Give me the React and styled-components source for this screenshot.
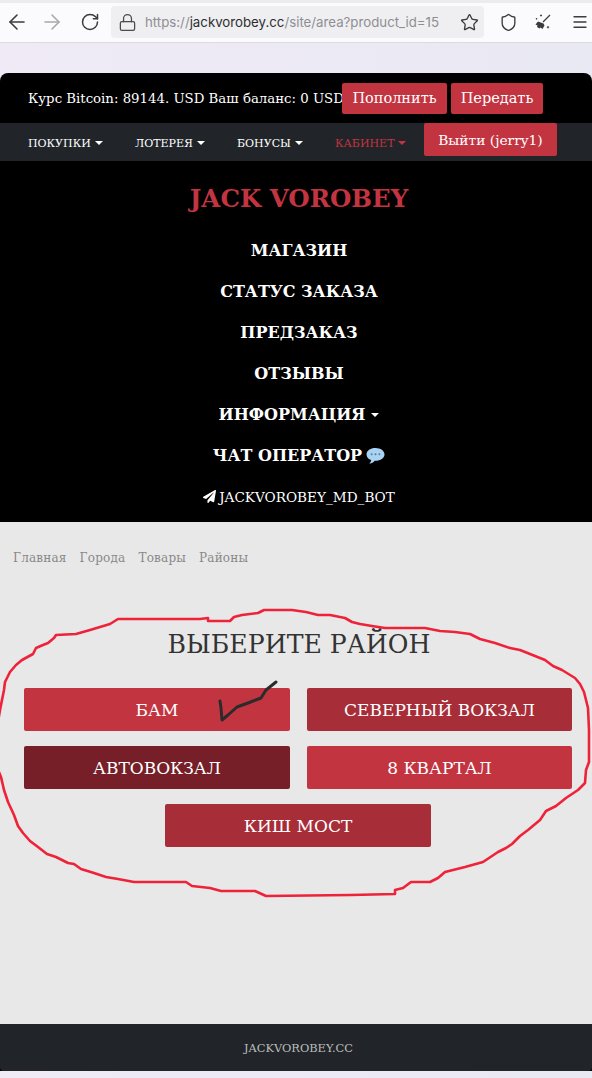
import React from "react";
import styled, { createGlobalStyle } from "styled-components";
import { ArrowLeft, ArrowRight, RotateCw, Lock, Star, Shield, Menu } from "lucide-react";
import { FaPaperPlane } from "react-icons/fa";

const serif = `"DejaVu Serif", "Liberation Serif", serif`;

const GlobalStyle = createGlobalStyle`
  html, body {
    margin: 0;
    padding: 0;
    background: #ebebf4;
  }
  * { box-sizing: border-box; }
`;

const Screen = styled.div`
  position: relative;
  width: 592px;
  height: 1078px;
  overflow: hidden;
  background: linear-gradient(90deg, #efeaf6 0%, #e9e9f3 100%);
  font-family: ${serif};
`;

const TopStrip = styled.div`
  height: 3px;
  background: #ececee;
`;

const Toolbar = styled.div`
  display: flex;
  align-items: center;
  height: 40px;
  padding-bottom: 1px;
  background: #fbfbfd;
  border-bottom: 1px solid #dcdce0;
`;

const ToolIcon = styled.div`
  flex: none;
  display: flex;
  justify-content: center;
  width: ${(p) => p.$w}px;
  color: ${(p) => (p.$dim ? "#a8a8ad" : "#3b3b40")};
`;

const UrlBox = styled.div`
  display: flex;
  align-items: center;
  flex: none;
  width: 373px;
  height: 32px;
  margin-left: 2px;
  padding-left: 7px;
  background: #efeff1;
  border-radius: 4px;
`;

const UrlText = styled.div`
  flex: 1;
  margin-left: 8px;
  font-family: "Inter", "Liberation Sans", sans-serif;
  font-size: 13.25px;
  color: #8e8e93;
  white-space: nowrap;

  b {
    font-weight: 400;
    color: #2d2d30;
  }
`;

const Page = styled.div`
  margin-top: 30px;
  border-radius: 8px 8px 0 0;
  overflow: hidden;
  background: #000;
`;

const InfoBar = styled.div`
  display: flex;
  align-items: center;
  height: 50px;
  padding: 0 0 0 28px;
  color: #fff;
`;

const InfoText = styled.div`
  width: 314px;
  font-size: 13.3px;
  white-space: nowrap;
`;

const RedButton = styled.div`
  display: flex;
  align-items: center;
  justify-content: center;
  flex: none;
  width: ${(p) => p.$w}px;
  height: ${(p) => p.$h}px;
  margin-right: ${(p) => p.$mr || 0}px;
  background: #c33441;
  border-radius: 2px;
  color: #fff;
  font-size: ${(p) => p.$size || 14.5}px;
`;

const NavBar = styled.div`
  display: flex;
  height: 38px;
  padding-left: 28px;
  background: #212529;
`;

const NavLink = styled.div`
  display: flex;
  align-items: center;
  flex: none;
  width: ${(p) => p.$w}px;
  height: 38px;
  padding-top: 2px;
  color: ${(p) => (p.$active ? "#c33441" : "#fff")};
  font-size: 11px;
  white-space: nowrap;
`;

const Caret = styled.span`
  display: inline-block;
  margin-left: ${(p) => p.$gap || 4}px;
  border-top: 4px solid currentColor;
  border-left: 4px solid transparent;
  border-right: 4px solid transparent;
`;

const Header = styled.div`
  display: flex;
  flex-direction: column;
  align-items: center;
  height: 361px;
  padding: 20px 0 0 6px;
  color: #fff;
`;

const Logo = styled.div`
  height: 35px;
  margin-bottom: 14px;
  color: #c33441;
  font-size: 24.5px;
  font-weight: 700;
  line-height: 35px;
`;

const MainLink = styled.div`
  display: flex;
  align-items: center;
  height: 41px;
  font-size: 16px;
  font-weight: 700;
`;

const BotLink = styled.div`
  display: flex;
  align-items: center;
  gap: 3px;
  height: 41px;
  font-size: 13.6px;
`;

const Content = styled.div`
  height: 502px;
  padding-top: 28px;
  background: #e8e8e8;
`;

const Crumbs = styled.div`
  display: flex;
  gap: 13px;
  height: 17px;
  padding-left: 13px;
  color: #888;
  font-size: 12px;
  letter-spacing: 0.2px;
  line-height: 17px;
`;

const Title = styled.h2`
  margin: 0;
  padding: 61px 0 0 6px;
  height: 121px;
  color: #333;
  font-size: 25.2px;
  font-weight: 400;
  line-height: 34px;
  text-align: center;
`;

const AreaGrid = styled.div`
  display: grid;
  grid-template-columns: 266px 265px;
  gap: 15px 17px;
  padding-left: 24px;
`;

const AreaButton = styled.div`
  display: flex;
  align-items: center;
  justify-content: center;
  height: 43px;
  padding-top: 1px;
  background: ${(p) => p.$bg};
  border-radius: 2px;
  color: #fff;
  font-size: 17px;
  ${(p) => p.$wide && "grid-column: 1 / -1; justify-self: center; width: 266px;"}
`;

const Footer = styled.div`
  display: flex;
  align-items: center;
  justify-content: center;
  height: 47px;
  padding-left: 5px;
  background: #212529;
  border-radius: 0 0 4px 4px;
  color: #bdbdbd;
  font-size: 11.4px;
`;

const Markup = styled.svg`
  position: absolute;
  left: 0;
  top: 0;
  pointer-events: none;
`;

const loop =
  "-6,745 0,710 4,690 5,682 10,672 16,665 22,660 33,654 36,648 43,645 48,643 54,638 56,635 76,634 83,632 90,630 100,627 110,624 118,619 200,619 208,618 208,621 230,621 234,617 242,615 258,613 264,610 292,610 306,612 318,615 330,615 345,618 352,622 360,624 372,626 385,628 425,628 440,631 455,632 470,634 480,639 495,643 510,648 520,650 535,656 545,660 553,666 562,670 575,678 580,684 584,692 588,708 589,730 589,762 586,770 585,783 578,790 566,798 556,806 546,811 540,820 528,830 520,836 512,844 506,848 498,852 483,862 465,867 445,872 438,878 430,882 411,882 403,888 395,890 395,894 351,895 266,896 255,891 221,891 210,888 192,886 186,882 134,882 118,879 106,877 94,873 81,869 74,864 68,863 56,857 47,854 38,847 30,841 23,833 18,826 14,815 8,802 4,790 1,777 -6,760";
const check = "220,701 221,708 222,720 228,715 237,707 248,703 261,698 266,690 276,682";

function Broom() {
  return (
    <svg width="18" height="18" viewBox="0 0 18 18">
      <path d="M9 9 16 2" stroke="#3b3b40" strokeWidth="1.3" fill="none" />
      <path d="M4 8.5 9.5 10.5 10.5 12.5 8.5 16 6.5 14.5 5.5 15.5 3 14 3.5 12.5 1.5 11.5Z" fill="#3b3b40" />
      <path d="M7 1.5v2M6 2.5h2M2.5 5v1.5M1.8 5.7h1.5M14 13v2.4M12.8 14.2h2.4" stroke="#3b3b40" strokeWidth="0.9" />
    </svg>
  );
}

function Bubble() {
  return (
    <svg width="19" height="18" viewBox="0 0 19 18" style={{ marginLeft: 4 }}>
      <path d="M9.5 1C4.5 1 .5 3.6.5 7.4c0 2.6 2 4.7 4.7 5.7-.2 1.4-.9 2.7-1.8 3.6 2.3-.3 4.2-1.5 5.4-3h.7c5 0 9-2.7 9-6.3S14.500 1 9.500 1z" fill="#a9d3f2" />
      <circle cx="5.600" cy="7.300" r="1" fill="#5d7f98" />
      <circle cx="9.500" cy="7.300" r="1" fill="#5d7f98" />
      <circle cx="13.400" cy="7.300" r="1" fill="#5d7f98" />
    </svg>
  );
}

const navItems = [
  { label: "ПОКУПКИ", w: 107 },
  { label: "ЛОТЕРЕЯ", w: 102 },
  { label: "БОНУСЫ", w: 98 },
  { label: "КАБИНЕТ", w: 89, active: true },
];

const areas = [
  { name: "БАМ", bg: "#c33441" },
  { name: "СЕВЕРНЫЙ ВОКЗАЛ", bg: "#a72e39" },
  { name: "АВТОВОКЗАЛ", bg: "#761f28" },
  { name: "8 КВАРТАЛ", bg: "#c33441" },
  { name: "КИШ МОСТ", bg: "#a72e39", wide: true },
];

export default function App() {
  return (
    <Screen>
      <GlobalStyle />
      <TopStrip />
      <Toolbar>
        <ToolIcon $w={33}><ArrowLeft size={24} strokeWidth={1.6} /></ToolIcon>
        <ToolIcon $w={38} $dim><ArrowRight size={24} strokeWidth={1.6} /></ToolIcon>
        <ToolIcon $w={38}><RotateCw size={20} strokeWidth={1.8} /></ToolIcon>
        <UrlBox>
          <Lock size={19} strokeWidth={1.6} color="#4a4a4f" />
          <UrlText>https://<b>jackvorobey.cc</b>/site/area?product_id=15</UrlText>
          <ToolIcon $w={30}><Star size={19} strokeWidth={1.7} /></ToolIcon>
        </UrlBox>
        <ToolIcon $w={48}><Shield size={19} strokeWidth={1.7} /></ToolIcon>
        <ToolIcon $w={22}><Broom /></ToolIcon>
        <ToolIcon $w={52}><Menu size={18} strokeWidth={1.7} /></ToolIcon>
      </Toolbar>

      <Page>
        <InfoBar>
          <InfoText>Курс Bitcoin: 89144. USD Ваш баланс: 0 USD</InfoText>
          <RedButton $w={105} $h={31} $mr={4}>Пополнить</RedButton>
          <RedButton $w={92} $h={31}>Передать</RedButton>
        </InfoBar>

        <NavBar>
          {navItems.map((item) => (
            <NavLink key={item.label} $w={item.w} $active={item.active}>
              {item.label}
              <Caret />
            </NavLink>
          ))}
          <RedButton $w={133} $h={33} $size={13.8}>Выйти (jerry1)</RedButton>
        </NavBar>

        <Header>
          <Logo>JACK VOROBEY</Logo>
          <MainLink>МАГАЗИН</MainLink>
          <MainLink>СТАТУС ЗАКАЗА</MainLink>
          <MainLink>ПРЕДЗАКАЗ</MainLink>
          <MainLink>ОТЗЫВЫ</MainLink>
          <MainLink>ИНФОРМАЦИЯ<Caret $gap={6} /></MainLink>
          <MainLink>ЧАТ ОПЕРАТОР<Bubble /></MainLink>
          <BotLink><FaPaperPlane size={13} />JACKVOROBEY_MD_BOT</BotLink>
        </Header>

        <Content>
          <Crumbs>
            <span>Главная</span>
            <span>Города</span>
            <span>Товары</span>
            <span>Районы</span>
          </Crumbs>
          <Title>ВЫБЕРИТЕ РАЙОН</Title>
          <AreaGrid>
            {areas.map((area) => (
              <AreaButton key={area.name} $bg={area.bg} $wide={area.wide}>{area.name}</AreaButton>
            ))}
          </AreaGrid>
        </Content>

        <Footer>JACKVOROBEY.CC</Footer>
      </Page>

      <Markup width="592" height="1078">
        <polyline points={loop} fill="none" stroke="#ee2339" strokeWidth="2.600" strokeLinejoin="round" />
        <polyline points={check} fill="none" stroke="#2b2b2b" strokeWidth="3" strokeLinejoin="round" strokeLinecap="round" />
      </Markup>
    </Screen>
  );
}
